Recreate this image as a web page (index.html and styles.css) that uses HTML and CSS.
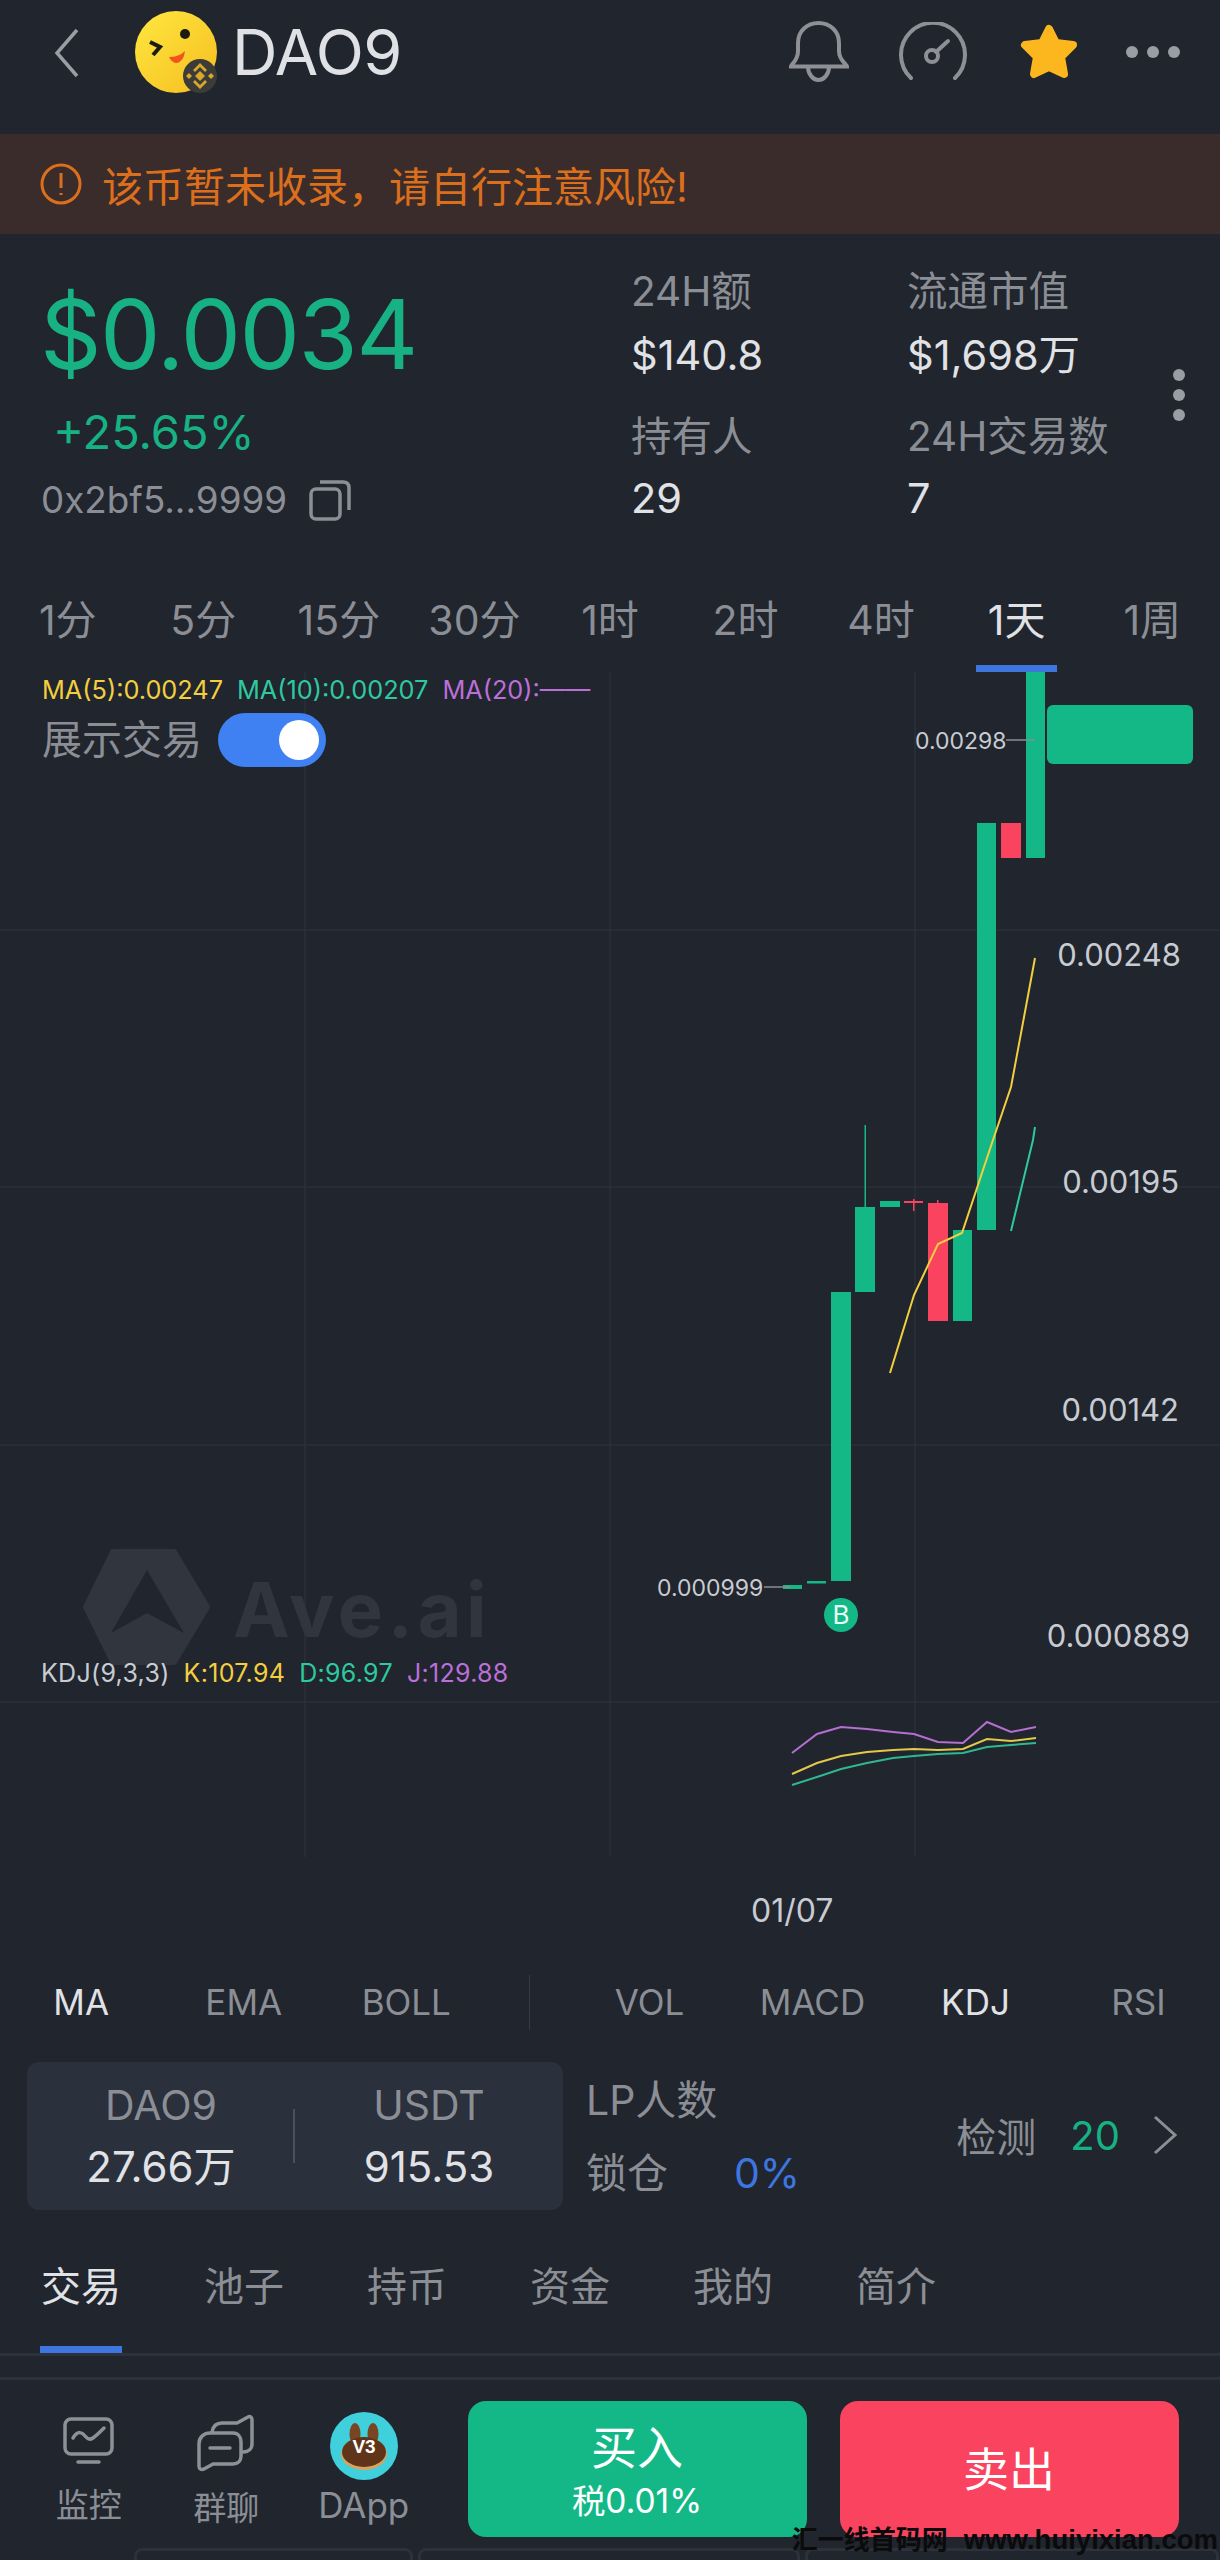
FILE: index.html
```html
<!DOCTYPE html>
<html lang="zh-CN">
<head>
    <meta charset="UTF-8">
    <meta name="viewport" content="width=device-width, initial-scale=1.0">
    <title>DAO9</title>
    <link rel="stylesheet" href="styles.css">
</head>
<body>
<div class="app">
    <!-- Top bar -->
    <header class="topbar">
        <svg class="back" viewBox="0 0 26 52"><path d="M23 3 L3 26 L23 49"/></svg>
        <svg class="avatar" viewBox="0 0 90 90">
            <defs>
                <linearGradient id="face" x1="0" y1="0" x2="1" y2="1">
                    <stop offset="0" stop-color="#ffe83f"/>
                    <stop offset="1" stop-color="#f5bd1f"/>
                </linearGradient>
            </defs>
            <circle cx="41" cy="41" r="41" fill="url(#face)"/>
            <circle cx="50" cy="23" r="5" fill="#1d1a12"/>
            <path d="M15 31 L25 36 L18 44" fill="none" stroke="#1d1a12" stroke-width="4"/>
            <path d="M34 46 Q44 46 50 40 Q49 50 42 52 Q37 52 34 46 Z" fill="#f2541b"/>
            <circle cx="65" cy="65" r="17" fill="#3b3b38"/>
            <g fill="#d8a72c">
                <path d="M65 60 L70 65 L65 70 L60 65 Z"/>
                <path d="M54 62 L57 65 L54 68 L51 65 Z"/>
                <path d="M76 62 L79 65 L76 68 L73 65 Z"/>
                <path d="M65 52 L72 59 L70 61 L65 56 L60 61 L58 59 Z"/>
                <path d="M65 78 L72 71 L70 69 L65 74 L60 69 L58 71 Z"/>
            </g>
        </svg>
        <div class="coin-name">DAO9</div>
        <div class="top-icons">
            <svg class="ic-bell" viewBox="0 0 62 62"><path d="M3 45.5 C3 43 10 40 10 30 V22 C10 10 19 2 30.5 2 S51 10 51 22 V30 C51 40 59 43 59 45.5 Z"/><path d="M20 46 C20 53 25 59 30.5 59 S41 53 41 46"/></svg>
            <svg class="ic-gauge" viewBox="0 0 68 60"><path d="M12 56 A32 32 0 1 1 56 56"/><circle cx="33" cy="34" r="6"/><path d="M37 30 L49 19"/></svg>
            <svg class="ic-star" viewBox="0 0 60 58"><path d="M30 6 L37 20 L54 22 L42 34 L45 51 L30 44 L15 51 L18 34 L6 22 L23 20 Z"/></svg>
            <div class="dots"><span></span><span></span><span></span></div>
        </div>
    </header>

    <!-- Risk warning -->
    <div class="warn">
        <svg class="warn-icon" viewBox="0 0 42 42"><circle cx="21" cy="21" r="19"/><path d="M21 10 V25"/><path d="M21 30 V32"/></svg>
        <span>该币暂未收录，请自行注意风险!</span>
    </div>

    <!-- Price + stats -->
    <section class="stats">
        <div class="price-col">
            <div class="price">$0.0034</div>
            <div class="change">+25.65%</div>
            <div class="addr">
                <span>0x2bf5...9999</span>
                <svg class="copy" viewBox="0 0 42 42"><rect x="2" y="10" width="29" height="30" rx="5"/><path d="M11 3 H34 C38 3 40 5 40 9 V31"/></svg>
            </div>
        </div>
        <div class="stat-grid">
            <div class="stat">
                <div class="stat-label">24H额</div>
                <div class="stat-value">$140.8</div>
            </div>
            <div class="stat">
                <div class="stat-label">流通市值</div>
                <div class="stat-value">$1,698万</div>
            </div>
            <div class="stat stat-low">
                <div class="stat-label">持有人</div>
                <div class="stat-value">29</div>
            </div>
            <div class="stat stat-low">
                <div class="stat-label">24H交易数</div>
                <div class="stat-value">7</div>
            </div>
        </div>
        <div class="kebab"><span></span><span></span><span></span></div>
    </section>

    <!-- Timeframes -->
    <nav class="frames">
        <div class="frame">1分</div>
        <div class="frame">5分</div>
        <div class="frame">15分</div>
        <div class="frame">30分</div>
        <div class="frame">1时</div>
        <div class="frame">2时</div>
        <div class="frame">4时</div>
        <div class="frame frame-on">1天</div>
        <div class="frame">1周</div>
    </nav>

    <!-- Chart canvas, svg uses page coordinates -->
    <div class="chart">
        <svg class="plot" viewBox="0 672 1220 1288">
            <g class="grid">
                <path d="M0 930 H1220 M0 1187 H1220 M0 1445 H1220 M0 1702 H1220"/>
                <path d="M305 672 V1857 M610 672 V1857 M915 672 V1857"/>
            </g>

            <path class="mark" d="M113 1552 H174 L207 1607 L174 1662 H113 L86 1607 Z"/>
            <path d="M147 1570 L184 1633 L147 1613 L111 1633 Z" fill="#20252e"/>

            <g class="up">
                <rect x="783" y="1585" width="19" height="4"/>
                <rect x="807" y="1581" width="19" height="2.5"/>
                <rect x="831" y="1292" width="20" height="289"/>
                <rect x="855" y="1207" width="20" height="85"/>
                <rect x="864.5" y="1125" width="1.5" height="82"/>
                <rect x="880" y="1201" width="20" height="6"/>
                <rect x="953" y="1230" width="19" height="91"/>
                <rect x="977" y="823" width="19" height="407"/>
                <rect x="1026" y="672" width="19" height="186"/>
            </g>
            <g class="down">
                <rect x="904" y="1201" width="19" height="2"/>
                <rect x="913" y="1199" width="1.5" height="12"/>
                <rect x="928" y="1203" width="20" height="118"/>
                <rect x="937" y="1200" width="1.5" height="3"/>
                <rect x="1001" y="823" width="20" height="35"/>
            </g>

            <path class="tick" d="M764 1587 H790"/>
            <path class="tick" d="M1006 740 H1035"/>

            <polyline class="line-yellow" points="890,1373 914,1295 938,1244 962,1233 993,1140 1011,1087 1035,958"/>
            <polyline class="line-teal" points="1011,1231 1033,1140 1035,1127"/>

            <polyline class="kdj-j" points="792,1753 817,1734 841,1727 867,1729 893,1732 914,1734 938,1742 963,1743 987,1722 1011,1732 1036,1727"/>
            <polyline class="kdj-k" points="792,1774 817,1763 841,1756 867,1752 893,1750 914,1749 938,1750 963,1749 987,1739 1011,1741 1036,1738"/>
            <polyline class="kdj-d" points="792,1785 817,1777 841,1769 867,1763 893,1758 914,1756 938,1754 963,1753 987,1747 1011,1745 1036,1743"/>

            <circle cx="841" cy="1615" r="17" fill="#14b886"/>
        </svg>

        <div class="legend">
            <span class="c-yellow">MA(5):0.00247</span>
            <span class="c-teal">MA(10):0.00207</span>
            <span class="c-purple">MA(20):——</span>
        </div>
        <div class="show-trades">
            <span>展示交易</span>
            <div class="toggle"><i></i></div>
        </div>

        <div class="watermark">Ave.ai</div>

        <div class="buy-flag">B</div>
        <div class="mini-label label-high">0.00298</div>
        <div class="mini-label label-low">0.000999</div>
        <div class="price-tag"></div>

        <div class="axis axis-1">0.00248</div>
        <div class="axis axis-2">0.00195</div>
        <div class="axis axis-3">0.00142</div>
        <div class="axis axis-4">0.000889</div>

        <div class="kdj-legend">
            <span class="c-grey">KDJ(9,3,3)</span>
            <span class="c-yellow">K:107.94</span>
            <span class="c-teal">D:96.97</span>
            <span class="c-purple">J:129.88</span>
        </div>

        <div class="date">01/07</div>
    </div>

    <!-- Indicators -->
    <div class="indicators">
        <div class="ind-group ind-left">
            <div class="ind ind-on">MA</div>
            <div class="ind">EMA</div>
            <div class="ind">BOLL</div>
        </div>
        <div class="ind-sep"></div>
        <div class="ind-group ind-right">
            <div class="ind">VOL</div>
            <div class="ind">MACD</div>
            <div class="ind ind-on">KDJ</div>
            <div class="ind">RSI</div>
        </div>
    </div>

    <!-- Pool row -->
    <div class="pool">
        <div class="pool-card">
            <div class="pool-side">
                <div class="pool-name">DAO9</div>
                <div class="pool-num">27.66万</div>
            </div>
            <div class="pool-side">
                <div class="pool-name">USDT</div>
                <div class="pool-num">915.53</div>
            </div>
        </div>
        <div class="lp">
            <div>LP人数</div>
            <div class="lp-lock"><span>锁仓</span><span class="lp-pct">0%</span></div>
        </div>
        <div class="check">
            <span>检测</span>
            <span class="check-num">20</span>
            <svg class="chev" viewBox="0 0 26 40"><path d="M3 2 L23 20 L3 38"/></svg>
        </div>
    </div>

    <!-- Tabs -->
    <nav class="tabs">
        <div class="tab tab-on">交易</div>
        <div class="tab">池子</div>
        <div class="tab">持币</div>
        <div class="tab">资金</div>
        <div class="tab">我的</div>
        <div class="tab">简介</div>
    </nav>

    <!-- Bottom bar -->
    <footer class="bottom">
        <div class="nav-item nav-monitor">
            <svg class="ic-monitor" viewBox="0 0 54 50"><rect x="3" y="3" width="47" height="35" rx="6"/><path d="M11 22 C16 14 20 16 24 21 C28 26 32 22 42 12"/><path d="M16 46 H37"/></svg>
            <span>监控</span>
        </div>
        <div class="nav-item">
            <svg class="ic-chat" viewBox="0 0 58 58"><path d="M2 30 C2 23 7 19 13 19 H36 C41 19 44 23 44 28 V42 C44 47 41 50 36 50 H16 L7 55 C4 56 2 55 2 52 Z"/><path d="M13 34 H33"/><path d="M15 18 C16 12 19 9 25 9 H40 L51 3 C53 2 55 3 55 6 V30 C55 35 51 38 46 38"/></svg>
            <span>群聊</span>
        </div>
        <div class="nav-item nav-dapp">
            <svg class="ic-dapp" viewBox="0 0 68 68">
                <circle cx="34" cy="34" r="34" fill="#3fd0dc"/>
                <ellipse cx="25" cy="22" rx="5.5" ry="11" fill="#7a4522"/>
                <ellipse cx="43" cy="22" rx="5.5" ry="11" fill="#7a4522"/>
                <ellipse cx="34" cy="42" rx="23" ry="16" fill="#d9a15e"/>
                <ellipse cx="34" cy="40" rx="22" ry="15" fill="#5f3418"/>
                <text class="v3" x="34" y="41" text-anchor="middle">V3</text>
            </svg>
            <span>DApp</span>
        </div>
        <div class="btn btn-buy">
            <div class="btn-main">买入</div>
            <div class="btn-sub">税0.01%</div>
        </div>
        <div class="btn btn-sell">
            <div class="btn-main">卖出</div>
        </div>
    </footer>

    <div class="peek">
        <div class="peek-pill peek-a"></div>
        <div class="peek-pill peek-b"></div>
        <div class="peek-pill peek-c"></div>
    </div>

    <div class="site-mark"><span>汇一线首码网</span><span class="site-url">www.huiyixian.com</span></div>
</div>
</body>
</html>
```

FILE: styles.css
```css
* {
    box-sizing: border-box;
}
body {
    margin: 0;
    padding: 0;
    background-color: #20252e;
}
.app {
    position: relative;
    width: 1220px;
    height: 2560px;
    overflow: hidden;
    background-color: #20252e;
    color: #e0e2e6;
    font-family: Inter, "Noto Sans CJK SC", sans-serif;
}

/* Top bar */
.topbar {
    display: flex;
    align-items: center;
    height: 134px;
    padding: 0 0 30px 54px;
}
.back {
    width: 26px;
    height: 52px;
    margin-top: 2px;
    fill: none;
    stroke: #9a9da3;
    stroke-width: 3.5;
}
.avatar {
    width: 90px;
    height: 90px;
    margin: 8px 0 0 55px;
}
.coin-name {
    margin-left: 7px;
    font-size: 63px;
    line-height: 76px;
    letter-spacing: -0.5px;
    color: #dfe1e5;
}
.top-icons {
    position: relative;
    display: flex;
    align-items: center;
    margin-left: auto;
    padding-right: 40px;
}
.top-icons svg {
    fill: none;
    stroke: #8e9096;
    stroke-width: 4;
    stroke-linecap: round;
}
.ic-bell {
    width: 62px;
    height: 62px;
}
.ic-gauge {
    width: 68px;
    height: 60px;
    margin-left: 49px;
}
.top-icons .ic-star {
    width: 60px;
    height: 58px;
    margin-left: 52px;
    fill: #fdb71e;
    stroke: #fdb71e;
    stroke-width: 8;
    stroke-linejoin: round;
}
.dots {
    display: flex;
    gap: 9px;
    margin-left: 47px;
}
.dots span {
    width: 12px;
    height: 12px;
    border-radius: 50%;
    background-color: #9a9da3;
}

/* Warning */
.warn {
    display: flex;
    align-items: center;
    height: 100px;
    padding-left: 40px;
    background-color: #3a2c2b;
    color: #dc6f1c;
    font-size: 41px;
}
.warn-icon {
    width: 42px;
    height: 42px;
    margin-right: 20px;
    fill: none;
    stroke: #dc6f1c;
    stroke-width: 3;
}

/* Price + stats */
.stats {
    display: flex;
    height: 336px;
}
.price-col {
    width: 631px;
    padding-left: 40px;
}
.price {
    margin-top: 40px;
    font-size: 96px;
    line-height: 120px;
    letter-spacing: -1.5px;
    color: #17b184;
}
.change {
    margin: 8px 0 0 13px;
    font-size: 47px;
    line-height: 60px;
    color: #17b184;
}
.addr {
    display: flex;
    align-items: center;
    margin: 13px 0 0 1px;
    font-size: 36.8px;
    line-height: 50px;
    color: #8b8e94;
}
.copy {
    width: 42px;
    height: 42px;
    margin-left: 22px;
    fill: none;
    stroke: #8b8e94;
    stroke-width: 3.5;
}
.stat-grid {
    display: grid;
    grid-template-columns: 276px 230px;
    align-content: start;
    padding-top: 33px;
}
.stat-label {
    font-size: 40.5px;
    line-height: 50px;
    color: #8b8e94;
}
.stat-value {
    margin-top: 13px;
    font-size: 41.5px;
    line-height: 50px;
    color: #e0e2e6;
}
.stat-low {
    margin-top: 32px;
}
.stat-low .stat-value {
    margin-top: 11px;
}
.kebab {
    display: flex;
    flex-direction: column;
    gap: 8px;
    margin: 135px 0 0 36px;
}
.kebab span {
    width: 12px;
    height: 12px;
    border-radius: 50%;
    background-color: #9a9da3;
}

/* Timeframes */
.frames {
    display: grid;
    grid-template-columns: repeat(9, 1fr);
    height: 102px;
}
.frame {
    position: relative;
    padding-top: 25px;
    text-align: center;
    font-size: 41px;
    line-height: 50px;
    color: #8b8e94;
}
.frame-on {
    color: #e0e2e6;
}
.frame-on::after {
    content: "";
    position: absolute;
    left: 27px;
    bottom: 0;
    width: 81px;
    height: 7px;
    background-color: #3e76e0;
}

/* Chart */
.chart {
    position: relative;
    height: 1288px;
}
.plot {
    position: absolute;
    left: 0;
    top: 0;
    width: 1220px;
    height: 1288px;
}
.grid path {
    fill: none;
    stroke: #2b3039;
    stroke-width: 1.5;
}
.mark {
    fill: #30353e;
    stroke: #30353e;
    stroke-width: 6;
    stroke-linejoin: round;
}
.up rect {
    fill: #14b886;
}
.down rect {
    fill: #f9435f;
}
.tick {
    fill: none;
    stroke: #8b8e94;
    stroke-width: 1.5;
}
.line-yellow,
.line-teal,
.kdj-j,
.kdj-k,
.kdj-d {
    fill: none;
    stroke-width: 2;
}
.line-yellow {
    stroke: #f3cf3e;
}
.line-teal {
    stroke: #2fc9a0;
}
.kdj-j {
    stroke: #b56fd0;
}
.kdj-k {
    stroke: #e2c94a;
}
.kdj-d {
    stroke: #2fb890;
}
.c-yellow {
    color: #f3cf3e;
}
.c-teal {
    color: #2fc9a0;
}
.c-purple {
    color: #bb6fd8;
}
.c-grey {
    color: #c8ccd2;
}
.legend {
    position: absolute;
    left: 42px;
    top: 3px;
    display: flex;
    gap: 14px;
    font-size: 25.3px;
    line-height: 30px;
    white-space: nowrap;
}
.show-trades {
    position: absolute;
    left: 42px;
    top: 41px;
    display: flex;
    align-items: center;
    gap: 16px;
    font-size: 40px;
    line-height: 54px;
    color: #8b8e94;
}
.toggle {
    display: flex;
    align-items: center;
    justify-content: flex-end;
    width: 108px;
    height: 54px;
    padding-right: 7px;
    border-radius: 27px;
    background-color: #3f80f2;
}
.toggle i {
    width: 40px;
    height: 40px;
    border-radius: 50%;
    background-color: white;
}
.watermark {
    position: absolute;
    left: 233px;
    top: 891px;
    font-size: 76px;
    line-height: 92px;
    font-weight: 700;
    letter-spacing: 4.5px;
    color: #30353e;
}
.buy-flag {
    position: absolute;
    left: 824px;
    top: 926px;
    width: 34px;
    text-align: center;
    font-size: 26px;
    line-height: 34px;
    color: #e8fff6;
}
.mini-label {
    position: absolute;
    font-size: 23px;
    line-height: 30px;
    color: #c8ccd2;
}
.label-high {
    left: 915px;
    top: 54px;
}
.label-low {
    left: 657px;
    top: 901px;
}
.price-tag {
    position: absolute;
    left: 1047px;
    top: 33px;
    width: 146px;
    height: 59px;
    border-radius: 6px;
    background-color: #14b886;
}
.axis {
    position: absolute;
    right: 39px;
    font-size: 31px;
    line-height: 36px;
    color: #c8ccd2;
}
.axis-1 {
    top: 265px;
}
.axis-2 {
    top: 492px;
    right: 41px;
}
.axis-3 {
    top: 720px;
    right: 41px;
}
.axis-4 {
    top: 946px;
    right: 30px;
}
.kdj-legend {
    position: absolute;
    left: 41px;
    top: 986px;
    display: flex;
    gap: 14px;
    font-size: 25px;
    line-height: 30px;
    letter-spacing: 0.3px;
    white-space: nowrap;
}
.date {
    position: absolute;
    left: 751px;
    top: 1221px;
    font-size: 32px;
    line-height: 36px;
    color: #c8ccd2;
}

/* Indicators */
.indicators {
    display: flex;
    align-items: center;
    height: 84px;
}
.ind-group {
    display: grid;
}
.ind-left {
    grid-template-columns: repeat(3, 162.5px);
    width: 488px;
}
.ind-right {
    grid-template-columns: repeat(4, 163px);
    margin-left: 39px;
}
.ind {
    text-align: center;
    font-size: 35px;
    line-height: 44px;
    color: #8b8e94;
}
.ind-on {
    color: #e0e2e6;
}
.ind-sep {
    width: 2px;
    height: 55px;
    margin-left: 41px;
    background-color: #363b45;
}

/* Pool row */
.pool {
    display: flex;
    height: 148px;
    margin-top: 18px;
}
.pool-card {
    position: relative;
    display: grid;
    grid-template-columns: 1fr 1fr;
    width: 536px;
    margin-left: 27px;
    border-radius: 12px;
    background-color: #2a303c;
}
.pool-card::after {
    content: "";
    position: absolute;
    left: 266px;
    top: 47px;
    width: 2px;
    height: 54px;
    background-color: #4a505c;
}
.pool-side {
    padding-top: 18px;
    text-align: center;
    line-height: 50px;
}
.pool-name {
    font-size: 41px;
    color: #8b8e94;
}
.pool-num {
    margin-top: 12px;
    font-size: 42px;
    color: #e0e2e6;
}
.lp {
    margin-left: 23px;
    padding-top: 13px;
    font-size: 41px;
    line-height: 50px;
    color: #8b8e94;
}
.lp-lock {
    display: flex;
    margin-top: 23px;
}
.lp-pct {
    margin-left: 66px;
    color: #3e76e0;
}
.check {
    display: flex;
    align-items: center;
    gap: 34px;
    height: 146px;
    margin-left: auto;
    padding-right: 42px;
    font-size: 40px;
    color: #8b8e94;
}
.check-num {
    color: #17b184;
}
.chev {
    width: 26px;
    height: 40px;
    margin-left: -2px;
    fill: none;
    stroke: #8b8e94;
    stroke-width: 3;
}

/* Tabs */
.tabs {
    display: flex;
    gap: 83px;
    height: 146px;
    padding: 47px 0 0 41px;
    border-bottom: 3px solid #2c313a;
}
.tab {
    position: relative;
    width: 80px;
    height: 96px;
    font-size: 40px;
    line-height: 60px;
    color: #8b8e94;
}
.tab-on {
    color: #e0e2e6;
}
.tab-on::after {
    content: "";
    position: absolute;
    left: -1px;
    bottom: 0;
    width: 82px;
    height: 7px;
    background-color: #3e76e0;
}

/* Bottom bar */
.bottom {
    display: flex;
    height: 160px;
    margin-top: 21px;
    padding-left: 20px;
    border-top: 3px solid #2c313a;
}
.nav-item {
    display: flex;
    flex-direction: column;
    align-items: center;
    justify-content: flex-end;
    width: 137.5px;
    height: 148px;
    font-size: 33px;
    line-height: 40px;
    color: #8b8e94;
}
.nav-monitor span {
    margin-bottom: 3px;
}
.nav-dapp {
    font-size: 35px;
}
.nav-dapp span {
    margin-bottom: 3px;
}
.nav-item svg {
    fill: none;
    stroke: #8e9096;
    stroke-width: 3.5;
    stroke-linecap: round;
    stroke-linejoin: round;
}
.ic-monitor {
    width: 54px;
    height: 50px;
    margin-bottom: 19px;
}
.ic-chat {
    width: 58px;
    height: 58px;
    margin-bottom: 16px;
}
.nav-item .ic-dapp {
    width: 68px;
    height: 68px;
    margin-bottom: 5px;
    stroke: none;
}
.v3 {
    fill: white;
    font-family: "Liberation Sans", sans-serif;
    font-size: 19px;
    font-weight: 700;
}
.btn {
    display: flex;
    flex-direction: column;
    align-items: center;
    justify-content: center;
    width: 339px;
    height: 136px;
    margin-top: 21px;
    border-radius: 18px;
    color: white;
}
.btn-buy {
    margin-left: 35px;
    background-color: #14b886;
}
.btn-sell {
    margin-left: 33px;
    background-color: #f9435f;
}
.btn-main {
    font-size: 46px;
    line-height: 60px;
}
.btn-sub {
    margin-top: 3px;
    font-size: 33.5px;
    line-height: 42px;
}
.peek {
    display: flex;
    gap: 5px;
    height: 20px;
    margin-top: 11px;
    padding-left: 134px;
}
.peek-pill {
    height: 20px;
    border: 3px solid #2c313a;
    border-radius: 8px;
}
.peek-a {
    width: 279px;
}
.peek-b {
    width: 382px;
}
.peek-c {
    width: 414px;
}
.site-mark {
    position: absolute;
    right: 2px;
    bottom: 8px;
    display: flex;
    align-items: center;
    gap: 16px;
    font-family: "Liberation Sans", "Noto Sans CJK SC", sans-serif;
    font-size: 26px;
    line-height: 24px;
    font-weight: 700;
    white-space: nowrap;
    color: #0b0b0c;
}
.site-url {
    font-size: 27.5px;
}
```
